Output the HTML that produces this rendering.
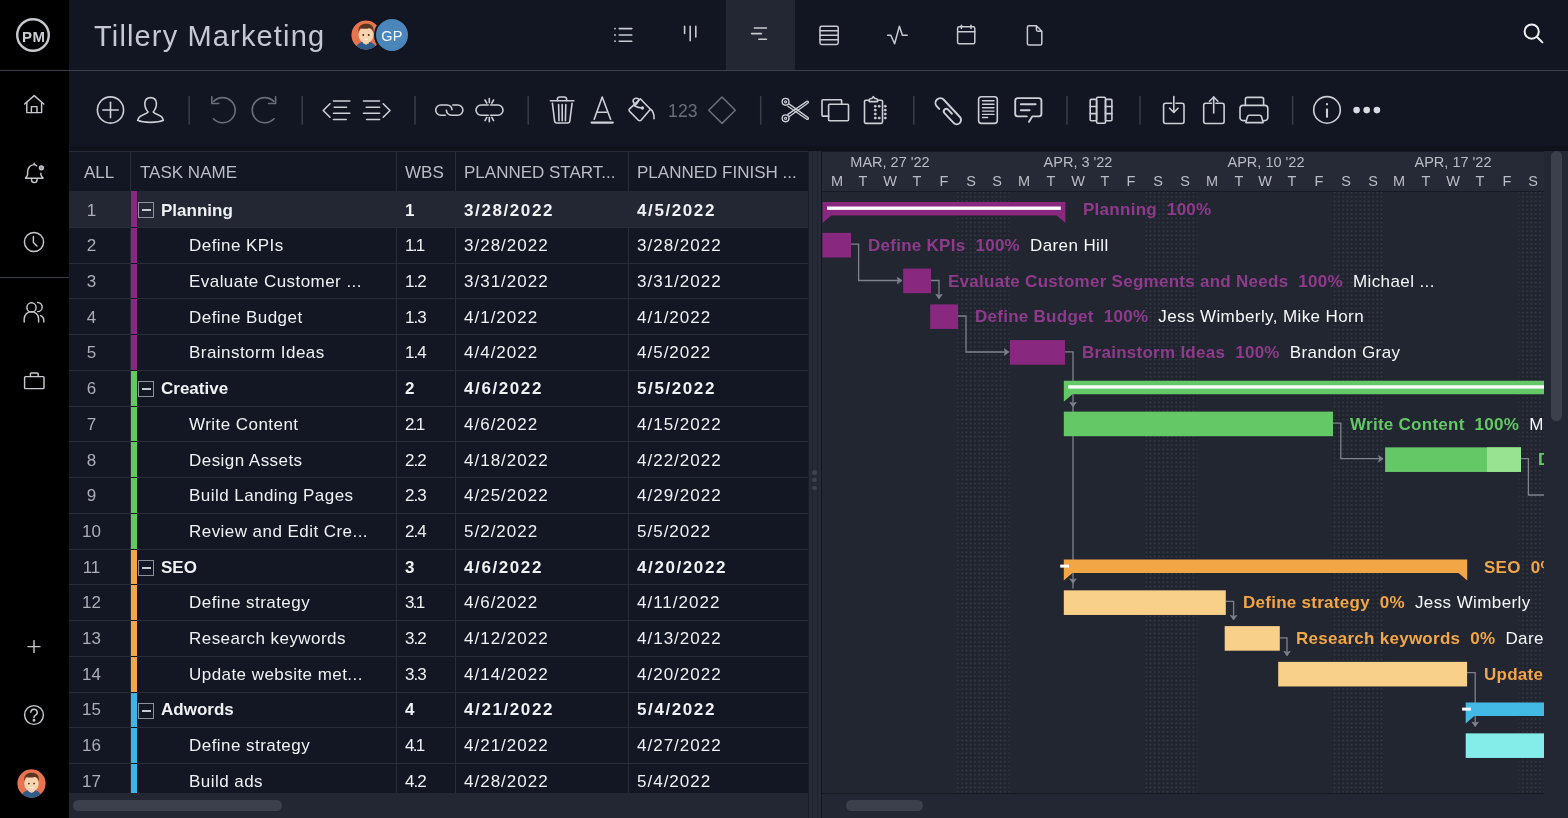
<!DOCTYPE html>
<html><head><meta charset="utf-8"><style>
*{box-sizing:border-box}
body{margin:0;width:1568px;height:818px;overflow:hidden;background:#121622;font-family:"Liberation Sans",sans-serif;position:relative}
.a{position:absolute}
.t{position:absolute;white-space:nowrap;line-height:1;will-change:transform}
svg{position:absolute;overflow:visible}
</style></head><body>

<div class="a" style="left:0;top:0;width:69px;height:818px;background:#000"></div>
<div class="a" style="left:0;top:70px;width:1568px;height:1px;background:#3b3f4b"></div>
<div class="a" style="left:0;top:277px;width:69px;height:1px;background:#3b3f4b"></div>
<div class="a" style="left:726px;top:0;width:69px;height:70px;background:#232733"></div>
<div class="t" style="left:94px;top:21.5px;font-size:29px;letter-spacing:1.15px;color:#c5c7d2">Tillery Marketing</div>
<div class="a" style="left:69px;top:146px;width:1499px;height:5px;background:#0f121b"></div>
<div class="a" style="left:69px;top:151px;width:739px;height:1px;background:#292d38"></div>
<div class="a" style="left:69px;top:152px;width:739px;height:39px;background:#131723"></div>
<div class="a" style="left:130px;top:152px;width:1px;height:39px;background:#292d38"></div>
<div class="a" style="left:396px;top:152px;width:1px;height:39px;background:#292d38"></div>
<div class="a" style="left:455px;top:152px;width:1px;height:39px;background:#292d38"></div>
<div class="a" style="left:628px;top:152px;width:1px;height:39px;background:#292d38"></div>
<div class="t" style="left:84.0px;top:164px;font-size:17px;color:#babdc6">ALL</div>
<div class="t" style="left:139.5px;top:164px;font-size:17px;color:#babdc6">TASK NAME</div>
<div class="t" style="left:405.0px;top:164px;font-size:17px;color:#babdc6">WBS</div>
<div class="t" style="left:463.5px;top:164px;font-size:17px;color:#babdc6">PLANNED START...</div>
<div class="t" style="left:636.5px;top:164px;font-size:17px;color:#babdc6">PLANNED FINISH ...</div>
<div class="a" style="left:69px;top:191px;width:739px;height:602px;overflow:hidden;background:#131723">
<div class="a" style="left:0;top:0px;width:739px;height:36px;background:#232733"></div>
<div class="a" style="left:62px;top:0px;width:6px;height:36px;background:#87297f"></div>
<div class="t" style="left:0;width:45px;text-align:center;top:10.60px;font-size:17px;color:#acaeb7">1</div>
<div class="a" style="left:69px;top:11.00px;width:16px;height:16px;border:1.5px solid #8d9099"></div>
<div class="a" style="left:72.5px;top:18.00px;width:9px;height:2px;background:#c8cad2"></div>
<div class="t" style="left:92px;top:10.60px;font-size:17px;font-weight:bold;color:#f0f1f4">Planning</div>
<div class="t" style="left:336px;top:10.60px;font-size:17px;font-weight:bold;letter-spacing:0;color:#f0f1f4">1</div>
<div class="t" style="left:394.5px;top:10.60px;font-size:17px;font-weight:bold;letter-spacing:1.6px;color:#f0f1f4">3/28/2022</div>
<div class="t" style="left:567.5px;top:10.60px;font-size:17px;font-weight:bold;letter-spacing:1.6px;color:#f0f1f4">4/5/2022</div>
<div class="a" style="left:0;top:36px;width:739px;height:36px;background:#131723"></div>
<div class="a" style="left:62px;top:37px;width:6px;height:35px;background:#87297f"></div>
<div class="t" style="left:0;width:45px;text-align:center;top:46.30px;font-size:17px;color:#acaeb7">2</div>
<div class="t" style="left:120px;top:46.30px;font-size:17px;letter-spacing:0.45px;color:#f0f1f4">Define KPIs</div>
<div class="t" style="left:336px;top:46.30px;font-size:17px;font-weight:normal;letter-spacing:-1.7px;color:#f0f1f4">1.1</div>
<div class="t" style="left:394.5px;top:46.30px;font-size:17px;font-weight:normal;letter-spacing:1px;color:#f0f1f4">3/28/2022</div>
<div class="t" style="left:567.5px;top:46.30px;font-size:17px;font-weight:normal;letter-spacing:1px;color:#f0f1f4">3/28/2022</div>
<div class="a" style="left:0;top:72px;width:739px;height:35px;background:#131723"></div>
<div class="a" style="left:62px;top:73px;width:6px;height:34px;background:#87297f"></div>
<div class="t" style="left:0;width:45px;text-align:center;top:82.00px;font-size:17px;color:#acaeb7">3</div>
<div class="t" style="left:120px;top:82.00px;font-size:17px;letter-spacing:0.45px;color:#f0f1f4">Evaluate Customer ...</div>
<div class="t" style="left:336px;top:82.00px;font-size:17px;font-weight:normal;letter-spacing:-1px;color:#f0f1f4">1.2</div>
<div class="t" style="left:394.5px;top:82.00px;font-size:17px;font-weight:normal;letter-spacing:1px;color:#f0f1f4">3/31/2022</div>
<div class="t" style="left:567.5px;top:82.00px;font-size:17px;font-weight:normal;letter-spacing:1px;color:#f0f1f4">3/31/2022</div>
<div class="a" style="left:0;top:107px;width:739px;height:36px;background:#131723"></div>
<div class="a" style="left:62px;top:108px;width:6px;height:35px;background:#87297f"></div>
<div class="t" style="left:0;width:45px;text-align:center;top:117.70px;font-size:17px;color:#acaeb7">4</div>
<div class="t" style="left:120px;top:117.70px;font-size:17px;letter-spacing:0.45px;color:#f0f1f4">Define Budget</div>
<div class="t" style="left:336px;top:117.70px;font-size:17px;font-weight:normal;letter-spacing:-1px;color:#f0f1f4">1.3</div>
<div class="t" style="left:394.5px;top:117.70px;font-size:17px;font-weight:normal;letter-spacing:1px;color:#f0f1f4">4/1/2022</div>
<div class="t" style="left:567.5px;top:117.70px;font-size:17px;font-weight:normal;letter-spacing:1px;color:#f0f1f4">4/1/2022</div>
<div class="a" style="left:0;top:143px;width:739px;height:36px;background:#131723"></div>
<div class="a" style="left:62px;top:144px;width:6px;height:35px;background:#87297f"></div>
<div class="t" style="left:0;width:45px;text-align:center;top:153.40px;font-size:17px;color:#acaeb7">5</div>
<div class="t" style="left:120px;top:153.40px;font-size:17px;letter-spacing:0.45px;color:#f0f1f4">Brainstorm Ideas</div>
<div class="t" style="left:336px;top:153.40px;font-size:17px;font-weight:normal;letter-spacing:-1px;color:#f0f1f4">1.4</div>
<div class="t" style="left:394.5px;top:153.40px;font-size:17px;font-weight:normal;letter-spacing:1px;color:#f0f1f4">4/4/2022</div>
<div class="t" style="left:567.5px;top:153.40px;font-size:17px;font-weight:normal;letter-spacing:1px;color:#f0f1f4">4/5/2022</div>
<div class="a" style="left:0;top:179px;width:739px;height:36px;background:#131723"></div>
<div class="a" style="left:62px;top:180px;width:6px;height:35px;background:#62c862"></div>
<div class="t" style="left:0;width:45px;text-align:center;top:189.10px;font-size:17px;color:#acaeb7">6</div>
<div class="a" style="left:69px;top:189.75px;width:16px;height:16px;border:1.5px solid #8d9099"></div>
<div class="a" style="left:72.5px;top:196.75px;width:9px;height:2px;background:#c8cad2"></div>
<div class="t" style="left:92px;top:189.10px;font-size:17px;font-weight:bold;color:#f0f1f4">Creative</div>
<div class="t" style="left:336px;top:189.10px;font-size:17px;font-weight:bold;letter-spacing:0;color:#f0f1f4">2</div>
<div class="t" style="left:394.5px;top:189.10px;font-size:17px;font-weight:bold;letter-spacing:1.6px;color:#f0f1f4">4/6/2022</div>
<div class="t" style="left:567.5px;top:189.10px;font-size:17px;font-weight:bold;letter-spacing:1.6px;color:#f0f1f4">5/5/2022</div>
<div class="a" style="left:0;top:215px;width:739px;height:35px;background:#131723"></div>
<div class="a" style="left:62px;top:216px;width:6px;height:34px;background:#62c862"></div>
<div class="t" style="left:0;width:45px;text-align:center;top:224.80px;font-size:17px;color:#acaeb7">7</div>
<div class="t" style="left:120px;top:224.80px;font-size:17px;letter-spacing:0.45px;color:#f0f1f4">Write Content</div>
<div class="t" style="left:336px;top:224.80px;font-size:17px;font-weight:normal;letter-spacing:-1.7px;color:#f0f1f4">2.1</div>
<div class="t" style="left:394.5px;top:224.80px;font-size:17px;font-weight:normal;letter-spacing:1px;color:#f0f1f4">4/6/2022</div>
<div class="t" style="left:567.5px;top:224.80px;font-size:17px;font-weight:normal;letter-spacing:1px;color:#f0f1f4">4/15/2022</div>
<div class="a" style="left:0;top:250px;width:739px;height:36px;background:#131723"></div>
<div class="a" style="left:62px;top:251px;width:6px;height:35px;background:#62c862"></div>
<div class="t" style="left:0;width:45px;text-align:center;top:260.50px;font-size:17px;color:#acaeb7">8</div>
<div class="t" style="left:120px;top:260.50px;font-size:17px;letter-spacing:0.45px;color:#f0f1f4">Design Assets</div>
<div class="t" style="left:336px;top:260.50px;font-size:17px;font-weight:normal;letter-spacing:-1px;color:#f0f1f4">2.2</div>
<div class="t" style="left:394.5px;top:260.50px;font-size:17px;font-weight:normal;letter-spacing:1px;color:#f0f1f4">4/18/2022</div>
<div class="t" style="left:567.5px;top:260.50px;font-size:17px;font-weight:normal;letter-spacing:1px;color:#f0f1f4">4/22/2022</div>
<div class="a" style="left:0;top:286px;width:739px;height:36px;background:#131723"></div>
<div class="a" style="left:62px;top:287px;width:6px;height:35px;background:#62c862"></div>
<div class="t" style="left:0;width:45px;text-align:center;top:296.20px;font-size:17px;color:#acaeb7">9</div>
<div class="t" style="left:120px;top:296.20px;font-size:17px;letter-spacing:0.45px;color:#f0f1f4">Build Landing Pages</div>
<div class="t" style="left:336px;top:296.20px;font-size:17px;font-weight:normal;letter-spacing:-1px;color:#f0f1f4">2.3</div>
<div class="t" style="left:394.5px;top:296.20px;font-size:17px;font-weight:normal;letter-spacing:1px;color:#f0f1f4">4/25/2022</div>
<div class="t" style="left:567.5px;top:296.20px;font-size:17px;font-weight:normal;letter-spacing:1px;color:#f0f1f4">4/29/2022</div>
<div class="a" style="left:0;top:322px;width:739px;height:36px;background:#131723"></div>
<div class="a" style="left:62px;top:323px;width:6px;height:35px;background:#62c862"></div>
<div class="t" style="left:0;width:45px;text-align:center;top:331.90px;font-size:17px;color:#acaeb7">10</div>
<div class="t" style="left:120px;top:331.90px;font-size:17px;letter-spacing:0.45px;color:#f0f1f4">Review and Edit Cre...</div>
<div class="t" style="left:336px;top:331.90px;font-size:17px;font-weight:normal;letter-spacing:-1px;color:#f0f1f4">2.4</div>
<div class="t" style="left:394.5px;top:331.90px;font-size:17px;font-weight:normal;letter-spacing:1px;color:#f0f1f4">5/2/2022</div>
<div class="t" style="left:567.5px;top:331.90px;font-size:17px;font-weight:normal;letter-spacing:1px;color:#f0f1f4">5/5/2022</div>
<div class="a" style="left:0;top:358px;width:739px;height:35px;background:#131723"></div>
<div class="a" style="left:62px;top:359px;width:6px;height:34px;background:#f2a649"></div>
<div class="t" style="left:0;width:45px;text-align:center;top:367.60px;font-size:17px;color:#acaeb7">11</div>
<div class="a" style="left:69px;top:368.50px;width:16px;height:16px;border:1.5px solid #8d9099"></div>
<div class="a" style="left:72.5px;top:375.50px;width:9px;height:2px;background:#c8cad2"></div>
<div class="t" style="left:92px;top:367.60px;font-size:17px;font-weight:bold;color:#f0f1f4">SEO</div>
<div class="t" style="left:336px;top:367.60px;font-size:17px;font-weight:bold;letter-spacing:0;color:#f0f1f4">3</div>
<div class="t" style="left:394.5px;top:367.60px;font-size:17px;font-weight:bold;letter-spacing:1.6px;color:#f0f1f4">4/6/2022</div>
<div class="t" style="left:567.5px;top:367.60px;font-size:17px;font-weight:bold;letter-spacing:1.6px;color:#f0f1f4">4/20/2022</div>
<div class="a" style="left:0;top:393px;width:739px;height:36px;background:#131723"></div>
<div class="a" style="left:62px;top:394px;width:6px;height:35px;background:#f2a649"></div>
<div class="t" style="left:0;width:45px;text-align:center;top:403.30px;font-size:17px;color:#acaeb7">12</div>
<div class="t" style="left:120px;top:403.30px;font-size:17px;letter-spacing:0.45px;color:#f0f1f4">Define strategy</div>
<div class="t" style="left:336px;top:403.30px;font-size:17px;font-weight:normal;letter-spacing:-1.7px;color:#f0f1f4">3.1</div>
<div class="t" style="left:394.5px;top:403.30px;font-size:17px;font-weight:normal;letter-spacing:1px;color:#f0f1f4">4/6/2022</div>
<div class="t" style="left:567.5px;top:403.30px;font-size:17px;font-weight:normal;letter-spacing:1px;color:#f0f1f4">4/11/2022</div>
<div class="a" style="left:0;top:429px;width:739px;height:36px;background:#131723"></div>
<div class="a" style="left:62px;top:430px;width:6px;height:35px;background:#f2a649"></div>
<div class="t" style="left:0;width:45px;text-align:center;top:439.00px;font-size:17px;color:#acaeb7">13</div>
<div class="t" style="left:120px;top:439.00px;font-size:17px;letter-spacing:0.45px;color:#f0f1f4">Research keywords</div>
<div class="t" style="left:336px;top:439.00px;font-size:17px;font-weight:normal;letter-spacing:-1px;color:#f0f1f4">3.2</div>
<div class="t" style="left:394.5px;top:439.00px;font-size:17px;font-weight:normal;letter-spacing:1px;color:#f0f1f4">4/12/2022</div>
<div class="t" style="left:567.5px;top:439.00px;font-size:17px;font-weight:normal;letter-spacing:1px;color:#f0f1f4">4/13/2022</div>
<div class="a" style="left:0;top:465px;width:739px;height:36px;background:#131723"></div>
<div class="a" style="left:62px;top:466px;width:6px;height:35px;background:#f2a649"></div>
<div class="t" style="left:0;width:45px;text-align:center;top:474.70px;font-size:17px;color:#acaeb7">14</div>
<div class="t" style="left:120px;top:474.70px;font-size:17px;letter-spacing:0.45px;color:#f0f1f4">Update website met...</div>
<div class="t" style="left:336px;top:474.70px;font-size:17px;font-weight:normal;letter-spacing:-1px;color:#f0f1f4">3.3</div>
<div class="t" style="left:394.5px;top:474.70px;font-size:17px;font-weight:normal;letter-spacing:1px;color:#f0f1f4">4/14/2022</div>
<div class="t" style="left:567.5px;top:474.70px;font-size:17px;font-weight:normal;letter-spacing:1px;color:#f0f1f4">4/20/2022</div>
<div class="a" style="left:0;top:501px;width:739px;height:35px;background:#131723"></div>
<div class="a" style="left:62px;top:502px;width:6px;height:34px;background:#3db5e6"></div>
<div class="t" style="left:0;width:45px;text-align:center;top:510.40px;font-size:17px;color:#acaeb7">15</div>
<div class="a" style="left:69px;top:511.50px;width:16px;height:16px;border:1.5px solid #8d9099"></div>
<div class="a" style="left:72.5px;top:518.50px;width:9px;height:2px;background:#c8cad2"></div>
<div class="t" style="left:92px;top:510.40px;font-size:17px;font-weight:bold;color:#f0f1f4">Adwords</div>
<div class="t" style="left:336px;top:510.40px;font-size:17px;font-weight:bold;letter-spacing:0;color:#f0f1f4">4</div>
<div class="t" style="left:394.5px;top:510.40px;font-size:17px;font-weight:bold;letter-spacing:1.6px;color:#f0f1f4">4/21/2022</div>
<div class="t" style="left:567.5px;top:510.40px;font-size:17px;font-weight:bold;letter-spacing:1.6px;color:#f0f1f4">5/4/2022</div>
<div class="a" style="left:0;top:536px;width:739px;height:36px;background:#131723"></div>
<div class="a" style="left:62px;top:537px;width:6px;height:35px;background:#3db5e6"></div>
<div class="t" style="left:0;width:45px;text-align:center;top:546.10px;font-size:17px;color:#acaeb7">16</div>
<div class="t" style="left:120px;top:546.10px;font-size:17px;letter-spacing:0.45px;color:#f0f1f4">Define strategy</div>
<div class="t" style="left:336px;top:546.10px;font-size:17px;font-weight:normal;letter-spacing:-1.7px;color:#f0f1f4">4.1</div>
<div class="t" style="left:394.5px;top:546.10px;font-size:17px;font-weight:normal;letter-spacing:1px;color:#f0f1f4">4/21/2022</div>
<div class="t" style="left:567.5px;top:546.10px;font-size:17px;font-weight:normal;letter-spacing:1px;color:#f0f1f4">4/27/2022</div>
<div class="a" style="left:0;top:572px;width:739px;height:36px;background:#131723"></div>
<div class="a" style="left:62px;top:573px;width:6px;height:35px;background:#3db5e6"></div>
<div class="t" style="left:0;width:45px;text-align:center;top:581.80px;font-size:17px;color:#acaeb7">17</div>
<div class="t" style="left:120px;top:581.80px;font-size:17px;letter-spacing:0.45px;color:#f0f1f4">Build ads</div>
<div class="t" style="left:336px;top:581.80px;font-size:17px;font-weight:normal;letter-spacing:-1px;color:#f0f1f4">4.2</div>
<div class="t" style="left:394.5px;top:581.80px;font-size:17px;font-weight:normal;letter-spacing:1px;color:#f0f1f4">4/28/2022</div>
<div class="t" style="left:567.5px;top:581.80px;font-size:17px;font-weight:normal;letter-spacing:1px;color:#f0f1f4">5/4/2022</div>
<div class="a" style="left:0;top:36px;width:739px;height:1px;background:#292d38"></div>
<div class="a" style="left:62px;top:36px;width:6px;height:1px;background:#10131b"></div>
<div class="a" style="left:0;top:72px;width:739px;height:1px;background:#292d38"></div>
<div class="a" style="left:62px;top:72px;width:6px;height:1px;background:#10131b"></div>
<div class="a" style="left:0;top:107px;width:739px;height:1px;background:#292d38"></div>
<div class="a" style="left:62px;top:107px;width:6px;height:1px;background:#10131b"></div>
<div class="a" style="left:0;top:143px;width:739px;height:1px;background:#292d38"></div>
<div class="a" style="left:62px;top:143px;width:6px;height:1px;background:#10131b"></div>
<div class="a" style="left:0;top:179px;width:739px;height:1px;background:#292d38"></div>
<div class="a" style="left:62px;top:179px;width:6px;height:1px;background:#10131b"></div>
<div class="a" style="left:0;top:215px;width:739px;height:1px;background:#292d38"></div>
<div class="a" style="left:62px;top:215px;width:6px;height:1px;background:#10131b"></div>
<div class="a" style="left:0;top:250px;width:739px;height:1px;background:#292d38"></div>
<div class="a" style="left:62px;top:250px;width:6px;height:1px;background:#10131b"></div>
<div class="a" style="left:0;top:286px;width:739px;height:1px;background:#292d38"></div>
<div class="a" style="left:62px;top:286px;width:6px;height:1px;background:#10131b"></div>
<div class="a" style="left:0;top:322px;width:739px;height:1px;background:#292d38"></div>
<div class="a" style="left:62px;top:322px;width:6px;height:1px;background:#10131b"></div>
<div class="a" style="left:0;top:358px;width:739px;height:1px;background:#292d38"></div>
<div class="a" style="left:62px;top:358px;width:6px;height:1px;background:#10131b"></div>
<div class="a" style="left:0;top:393px;width:739px;height:1px;background:#292d38"></div>
<div class="a" style="left:62px;top:393px;width:6px;height:1px;background:#10131b"></div>
<div class="a" style="left:0;top:429px;width:739px;height:1px;background:#292d38"></div>
<div class="a" style="left:62px;top:429px;width:6px;height:1px;background:#10131b"></div>
<div class="a" style="left:0;top:465px;width:739px;height:1px;background:#292d38"></div>
<div class="a" style="left:62px;top:465px;width:6px;height:1px;background:#10131b"></div>
<div class="a" style="left:0;top:501px;width:739px;height:1px;background:#292d38"></div>
<div class="a" style="left:62px;top:501px;width:6px;height:1px;background:#10131b"></div>
<div class="a" style="left:0;top:536px;width:739px;height:1px;background:#292d38"></div>
<div class="a" style="left:62px;top:536px;width:6px;height:1px;background:#10131b"></div>
<div class="a" style="left:0;top:572px;width:739px;height:1px;background:#292d38"></div>
<div class="a" style="left:62px;top:572px;width:6px;height:1px;background:#10131b"></div>
<div class="a" style="left:0;top:608px;width:739px;height:1px;background:#292d38"></div>
<div class="a" style="left:62px;top:608px;width:6px;height:1px;background:#10131b"></div>
<div class="a" style="left:61px;top:35.75px;width:1px;height:570px;background:#292d38"></div>
<div class="a" style="left:327px;top:35.75px;width:1px;height:570px;background:#292d38"></div>
<div class="a" style="left:386px;top:35.75px;width:1px;height:570px;background:#292d38"></div>
<div class="a" style="left:559px;top:35.75px;width:1px;height:570px;background:#292d38"></div>
</div>
<div class="a" style="left:69px;top:793px;width:739px;height:25px;background:#232733"></div>
<div class="a" style="left:73px;top:800px;width:209px;height:11px;border-radius:6px;background:#3c404d"></div>
<div class="a" style="left:808px;top:151px;width:14px;height:667px;background:#262a36;border-left:1px solid #1a1e29;border-right:1.5px solid #14171f"></div>
<div class="a" style="left:812px;top:151px;width:1px;height:667px;background:#20242f"></div>
<div class="a" style="left:817px;top:151px;width:1px;height:667px;background:#20242f"></div>
<div class="a" style="left:812.2px;top:470.4px;width:4.6px;height:4.6px;border-radius:50%;background:#3e424e"></div>
<div class="a" style="left:812.2px;top:477.8px;width:4.6px;height:4.6px;border-radius:50%;background:#3e424e"></div>
<div class="a" style="left:812.2px;top:485.5px;width:4.6px;height:4.6px;border-radius:50%;background:#3e424e"></div>
<div class="a" style="left:822px;top:151px;width:722px;height:41px;background:#262a36;border-top:1px solid #161a25;border-bottom:1px solid #161a25"></div>
<div class="a" style="left:822px;top:192px;width:722px;height:601px;background:#222631;overflow:hidden" id="gb">
</div>
<div class="a" style="left:822px;top:793px;width:722px;height:25px;background:#232733;border-top:1px solid #171a24"></div>
<div class="a" style="left:846px;top:800px;width:77px;height:11px;border-radius:6px;background:#3c404d"></div>
<div class="a" style="left:1544px;top:151px;width:24px;height:667px;background:#232733"></div>
<div class="a" style="left:1551px;top:151px;width:11px;height:270px;border-radius:6px;background:#3c404d"></div>
<div class="t" style="left:790.30px;width:200px;text-align:center;top:155px;font-size:14.5px;color:#babdc6">MAR, 27 '22</div>
<div class="t" style="left:977.90px;width:200px;text-align:center;top:155px;font-size:14.5px;color:#babdc6">APR, 3 '22</div>
<div class="t" style="left:1165.50px;width:200px;text-align:center;top:155px;font-size:14.5px;color:#babdc6">APR, 10 '22</div>
<div class="t" style="left:1353.10px;width:200px;text-align:center;top:155px;font-size:14.5px;color:#babdc6">APR, 17 '22</div>
<div class="t" style="left:821.60px;width:30px;text-align:center;top:174.1px;font-size:14.5px;color:#babdc6">M</div>
<div class="t" style="left:848.40px;width:30px;text-align:center;top:174.1px;font-size:14.5px;color:#babdc6">T</div>
<div class="t" style="left:875.20px;width:30px;text-align:center;top:174.1px;font-size:14.5px;color:#babdc6">W</div>
<div class="t" style="left:902.00px;width:30px;text-align:center;top:174.1px;font-size:14.5px;color:#babdc6">T</div>
<div class="t" style="left:928.80px;width:30px;text-align:center;top:174.1px;font-size:14.5px;color:#babdc6">F</div>
<div class="t" style="left:955.60px;width:30px;text-align:center;top:174.1px;font-size:14.5px;color:#babdc6">S</div>
<div class="t" style="left:982.40px;width:30px;text-align:center;top:174.1px;font-size:14.5px;color:#babdc6">S</div>
<div class="t" style="left:1009.20px;width:30px;text-align:center;top:174.1px;font-size:14.5px;color:#babdc6">M</div>
<div class="t" style="left:1036.00px;width:30px;text-align:center;top:174.1px;font-size:14.5px;color:#babdc6">T</div>
<div class="t" style="left:1062.80px;width:30px;text-align:center;top:174.1px;font-size:14.5px;color:#babdc6">W</div>
<div class="t" style="left:1089.60px;width:30px;text-align:center;top:174.1px;font-size:14.5px;color:#babdc6">T</div>
<div class="t" style="left:1116.40px;width:30px;text-align:center;top:174.1px;font-size:14.5px;color:#babdc6">F</div>
<div class="t" style="left:1143.20px;width:30px;text-align:center;top:174.1px;font-size:14.5px;color:#babdc6">S</div>
<div class="t" style="left:1170.00px;width:30px;text-align:center;top:174.1px;font-size:14.5px;color:#babdc6">S</div>
<div class="t" style="left:1196.80px;width:30px;text-align:center;top:174.1px;font-size:14.5px;color:#babdc6">M</div>
<div class="t" style="left:1223.60px;width:30px;text-align:center;top:174.1px;font-size:14.5px;color:#babdc6">T</div>
<div class="t" style="left:1250.40px;width:30px;text-align:center;top:174.1px;font-size:14.5px;color:#babdc6">W</div>
<div class="t" style="left:1277.20px;width:30px;text-align:center;top:174.1px;font-size:14.5px;color:#babdc6">T</div>
<div class="t" style="left:1304.00px;width:30px;text-align:center;top:174.1px;font-size:14.5px;color:#babdc6">F</div>
<div class="t" style="left:1330.80px;width:30px;text-align:center;top:174.1px;font-size:14.5px;color:#babdc6">S</div>
<div class="t" style="left:1357.60px;width:30px;text-align:center;top:174.1px;font-size:14.5px;color:#babdc6">S</div>
<div class="t" style="left:1384.40px;width:30px;text-align:center;top:174.1px;font-size:14.5px;color:#babdc6">M</div>
<div class="t" style="left:1411.20px;width:30px;text-align:center;top:174.1px;font-size:14.5px;color:#babdc6">T</div>
<div class="t" style="left:1438.00px;width:30px;text-align:center;top:174.1px;font-size:14.5px;color:#babdc6">W</div>
<div class="t" style="left:1464.80px;width:30px;text-align:center;top:174.1px;font-size:14.5px;color:#babdc6">T</div>
<div class="t" style="left:1491.60px;width:30px;text-align:center;top:174.1px;font-size:14.5px;color:#babdc6">F</div>
<div class="t" style="left:1518.40px;width:30px;text-align:center;top:174.1px;font-size:14.5px;color:#babdc6">S</div>
<svg width="722" height="601" viewBox="822 192 722 601" style="left:822px;top:192px;overflow:hidden">
<defs><pattern id="dots" x="955.76" y="190.5" width="4.28" height="4.28" patternUnits="userSpaceOnUse"><rect width="4.28" height="4.28" fill="#20242e"/><circle cx="2.14" cy="2.14" r="0.9" fill="#383c49"/></pattern></defs>
<rect x="956.00" y="192" width="53.60" height="601" fill="url(#dots)"/>
<rect x="1143.60" y="192" width="53.60" height="601" fill="url(#dots)"/>
<rect x="1331.20" y="192" width="53.60" height="601" fill="url(#dots)"/>
<rect x="1518.80" y="192" width="53.60" height="601" fill="url(#dots)"/>
<g fill="none" stroke="#7f828b" stroke-width="1.3" stroke-linejoin="miter"><path d="M851,244.2 H858.6 V280.5 H901.5"/><path d="M897.3,277.3 L901.8,280.5 L897.3,283.7 L898.4,280.5 Z" fill="#7f828b" stroke-width="0.8"/><path d="M931,280.5 H939 V298.5"/><path d="M935.8,294.3 L939.0,298.8 L942.2,294.3 L939.0,295.4 Z" fill="#7f828b" stroke-width="0.8"/><path d="M958,316 H966 V352 H1008.5"/><path d="M1004.3,348.8 L1008.8,352.0 L1004.3,355.2 L1005.4,352.0 Z" fill="#7f828b" stroke-width="0.8"/><path d="M1065,351.8 H1073 V588.5"/><path d="M1069.8,402.3 L1073.0,406.8 L1076.2,402.3 L1073.0,403.4 Z" fill="#7f828b" stroke-width="0.8"/><path d="M1069.8,578.8 L1073.0,583.3 L1076.2,578.8 L1073.0,579.9 Z" fill="#7f828b" stroke-width="0.8"/><path d="M1333,423.2 H1340.8 V458.7 H1382.8"/><path d="M1378.6,455.5 L1383.1,458.7 L1378.6,461.9 L1379.7,458.7 Z" fill="#7f828b" stroke-width="0.8"/><path d="M1521,458.7 H1528.4 V495 H1550"/><path d="M1226,601.3 H1233.6 V619.6"/><path d="M1230.4,615.4 L1233.6,619.9 L1236.8,615.4 L1233.6,616.5 Z" fill="#7f828b" stroke-width="0.8"/><path d="M1280,637.9 H1287 V655.5"/><path d="M1283.8,651.3 L1287.0,655.8 L1290.2,651.3 L1287.0,652.4 Z" fill="#7f828b" stroke-width="0.8"/><path d="M1467,672.7 H1475.2 V726.2"/><path d="M1472.0,722.0 L1475.2,726.5 L1478.4,722.0 L1475.2,723.1 Z" fill="#7f828b" stroke-width="0.8"/></g>
<path d="M822.60,201.90 H1065.40 V223.10 L1056.80,215.50 L1056.80,215.50 H831.20 L822.60,223.10 Z" fill="#88297f"/><rect x="827.00" y="206.50" width="233.80" height="3.4" fill="#fbfbfd"/><rect x="822.40" y="232.85" width="28.60" height="24.6" fill="#88297f"/><rect x="903.20" y="268.60" width="27.80" height="24.6" fill="#88297f"/><rect x="930.20" y="304.35" width="27.80" height="24.6" fill="#88297f"/><rect x="1010.00" y="340.10" width="55.00" height="24.6" fill="#88297f"/><path d="M1063.80,380.65 H1600.00 V401.85 L1591.40,394.25 L1591.40,394.25 H1072.40 L1063.80,401.85 Z" fill="#63c865"/><rect x="1068.20" y="385.25" width="527.20" height="3.4" fill="#fbfbfd"/><rect x="1063.80" y="411.60" width="269.20" height="24.6" fill="#63c865"/><rect x="1385.10" y="447.35" width="135.90" height="24.6" fill="#63c865"/><rect x="1487.00" y="447.35" width="34.00" height="24.6" fill="#97e391"/><path d="M1063.80,559.40 H1467.20 V580.60 L1458.60,573.00 L1458.60,573.00 H1072.40 L1063.80,580.60 Z" fill="#f3a646"/><rect x="1060.20" y="564.60" width="8.8" height="3" fill="#fbfbfd"/><rect x="1063.80" y="590.35" width="162.00" height="24.6" fill="#f9d08a"/><rect x="1224.70" y="626.10" width="55.10" height="24.6" fill="#f9d08a"/><rect x="1278.20" y="661.85" width="188.90" height="24.6" fill="#f9d08a"/><path d="M1465.70,702.40 H1600.00 V723.60 L1591.40,716.00 L1591.40,716.00 H1474.30 L1465.70,723.60 Z" fill="#43bae6"/><rect x="1462.10" y="707.60" width="8.8" height="3" fill="#fbfbfd"/><rect x="1465.70" y="733.35" width="134.30" height="24.6" fill="#84ece9"/>
</svg>
<div class="a" style="left:822px;top:192px;width:722px;height:601px;overflow:hidden">
<div class="t" style="left:260.60px;top:9.20px;font-size:17px;letter-spacing:0.27px"><b style="color:#8f3a8c">Planning&nbsp; 100%</b></div><div class="t" style="left:46.00px;top:44.95px;font-size:17px;letter-spacing:0.27px"><b style="color:#8f3a8c">Define KPIs&nbsp; 100%</b><span style="color:#f6f7f9;margin-left:10px;letter-spacing:0.4px">Daren Hill</span></div><div class="t" style="left:126.00px;top:80.70px;font-size:17px;letter-spacing:0.27px"><b style="color:#8f3a8c">Evaluate Customer Segments and Needs&nbsp; 100%</b><span style="color:#f6f7f9;margin-left:10px;letter-spacing:0.4px">Michael ...</span></div><div class="t" style="left:153.00px;top:116.45px;font-size:17px;letter-spacing:0.27px"><b style="color:#8f3a8c">Define Budget&nbsp; 100%</b><span style="color:#f6f7f9;margin-left:10px;letter-spacing:0.4px">Jess Wimberly, Mike Horn</span></div><div class="t" style="left:260.00px;top:152.20px;font-size:17px;letter-spacing:0.27px"><b style="color:#8f3a8c">Brainstorm Ideas&nbsp; 100%</b><span style="color:#f6f7f9;margin-left:10px;letter-spacing:0.4px">Brandon Gray</span></div><div class="t" style="left:528.00px;top:223.70px;font-size:17px;letter-spacing:0.27px"><b style="color:#63c865">Write Content&nbsp; 100%</b><span style="color:#f6f7f9;margin-left:10px;letter-spacing:0.4px">Michael Gray</span></div><div class="t" style="left:716.00px;top:259.45px;font-size:17px;letter-spacing:0.27px"><b style="color:#63c865">Design Assets&nbsp; 50%</b><span style="color:#f6f7f9;margin-left:10px;letter-spacing:0.4px">Someone</span></div><div class="t" style="left:662.00px;top:366.70px;font-size:17px;letter-spacing:0.27px"><b style="color:#f3a646">SEO&nbsp; 0%</b></div><div class="t" style="left:421.00px;top:402.45px;font-size:17px;letter-spacing:0.27px"><b style="color:#f3a646">Define strategy&nbsp; 0%</b><span style="color:#f6f7f9;margin-left:10px;letter-spacing:0.4px">Jess Wimberly</span></div><div class="t" style="left:474.00px;top:438.20px;font-size:17px;letter-spacing:0.27px"><b style="color:#f3a646">Research keywords&nbsp; 0%</b><span style="color:#f6f7f9;margin-left:10px;letter-spacing:0.4px">Daren Hill</span></div><div class="t" style="left:662.00px;top:473.95px;font-size:17px;letter-spacing:0.27px"><b style="color:#f3a646">Update website meta&nbsp; 0%</b></div>
</div>
<svg width="1568" height="818" style="left:0;top:0" fill="none" stroke="#3a3e4a" stroke-width="1.5" stroke-linecap="round" stroke-linejoin="round"><line x1="189.2" y1="96.5" x2="189.2" y2="124" /><line x1="302.2" y1="96.5" x2="302.2" y2="124" /><line x1="415.0" y1="96.5" x2="415.0" y2="124" /><line x1="528.2" y1="96.5" x2="528.2" y2="124" /><line x1="760.7" y1="96.5" x2="760.7" y2="124" /><line x1="913.8" y1="96.5" x2="913.8" y2="124" /><line x1="1067.0" y1="96.5" x2="1067.0" y2="124" /><line x1="1140.0" y1="96.5" x2="1140.0" y2="124" /><line x1="1292.6" y1="96.5" x2="1292.6" y2="124" /></svg>
<svg width="1568" height="818" style="left:0;top:0" fill="none" stroke="#cdcfd6" stroke-width="1.6" stroke-linecap="round" stroke-linejoin="round"><circle cx="110.5" cy="110" r="13.1"/><line x1="102.8" y1="110" x2="118.2" y2="110"/><line x1="110.5" y1="102.3" x2="110.5" y2="117.7"/><path d="M148.1,112 C143.5,107 143.2,97.6 150.6,97.6 C158,97.6 157.7,107 153.2,112 C155.5,114.6 160.5,115 162,117.2 L163.4,120.3 C158,123 143,123 137.6,120.3 L139.2,117.2 C140.7,115 145.7,114.6 148.1,112 Z"/><path d="M330,103.8 L323.2,110.5 L330,117.2"/><line x1="333.5" y1="101" x2="349.8" y2="101"/><line x1="334.2" y1="107.2" x2="346.6" y2="107.2"/><line x1="333.5" y1="113.3" x2="349.8" y2="113.3"/><line x1="333.5" y1="119.5" x2="346.2" y2="119.5"/><path d="M383.2,103.8 L390,110.5 L383.2,117.2"/><line x1="363.5" y1="101" x2="379.6" y2="101"/><line x1="366.2" y1="107.2" x2="379.6" y2="107.2"/><line x1="363.5" y1="113.3" x2="379.6" y2="113.3"/><line x1="366.6" y1="119.5" x2="379.6" y2="119.5"/><path d="M445.3,115.2 H440.8 A5.1,5.1 0 0 1 440.8,105 H447 A5.2,5.2 0 0 1 452,109.6"/><path d="M452.8,105 H457.8 A5.1,5.1 0 0 1 457.8,115.2 H451.4 A5.1,5.1 0 0 1 446.4,110.4"/><path d="M488.2,115.2 H481.1 A5.1,5.1 0 0 1 481.1,105 H488.2"/><path d="M490.5,105 H497.9 A5.1,5.1 0 0 1 497.9,115.2 H490.5"/><line x1="489.3" y1="98.6" x2="489.3" y2="102.6"/><line x1="485" y1="100" x2="486.8" y2="103.2"/><line x1="493.6" y1="100" x2="491.8" y2="103.2"/><line x1="489.3" y1="117.6" x2="489.3" y2="121.8"/><line x1="485" y1="120.6" x2="486.8" y2="117.4"/><line x1="493.6" y1="120.6" x2="491.8" y2="117.4"/><line x1="550.3" y1="100.8" x2="573.9" y2="100.8"/><path d="M557.4,100.6 V99.2 A2.2,2.2 0 0 1 559.6,97 H564.4 A2.2,2.2 0 0 1 566.6,99.2 V100.6"/><path d="M552.4,103.2 L554.6,121 A2.2,2.2 0 0 0 556.8,123 H567.6 A2.2,2.2 0 0 0 569.8,121 L572.1,103.2"/><line x1="558.6" y1="104.5" x2="559" y2="120.8"/><line x1="562.2" y1="104.5" x2="562.2" y2="120.8"/><line x1="565.8" y1="104.5" x2="565.4" y2="120.8"/><path d="M594.2,119.2 L602.2,97 L610.6,119.2"/><line x1="597.6" y1="112.3" x2="606.8" y2="112.3"/><line x1="591.6" y1="122.6" x2="612.8" y2="122.6" stroke-width="2.2"/><path d="M640.3,98.8 L650.4,109.2 L641,120.2 A1.8,1.8 0 0 1 638.4,120.2 L629.6,111.4 A1.8,1.8 0 0 1 629.6,108.8 Z"/><path d="M634.8,103.8 C631.5,100.8 633.5,98 637,98.3 C640.5,98.6 638,103.5 634.4,105.8 C637.4,107.6 640.4,108 642.2,108"/><circle cx="642.4" cy="108" r="0.9" fill="#cdcfd6"/><path d="M650.4,109.2 C653.5,111 654.2,114 654,118.8"/><circle cx="785.6" cy="101.8" r="3.4" stroke-width="1.4"/><circle cx="785.6" cy="101.8" r="1.1" stroke-width="1.1"/><circle cx="785.6" cy="118.3" r="3.4" stroke-width="1.4"/><circle cx="785.6" cy="118.3" r="1.1" stroke-width="1.1"/><path d="M789.35,104.14 L808,117.6 A1,1 0 0 1 806.8,119.2 L787.85,106.26" stroke-width="1.3"/><path d="M787.85,114.34 L806.83,101.38 A1,1 0 0 1 807.98,103.02 L789.35,116.46" stroke-width="1.3"/><path d="M828.6,116.1 H822.8 A0.8,0.8 0 0 1 822,115.3 V100.5 A0.8,0.8 0 0 1 822.8,99.7 H840.8 A0.8,0.8 0 0 1 841.6,100.5 V104.2"/><rect x="828.6" y="104.2" width="19.9" height="16.5" rx="1"/><path d="M869.2,100.2 H865.8 A1.3,1.3 0 0 0 864.5,101.5 V122.1 A1.3,1.3 0 0 0 865.8,123.4 H881.2 A1.3,1.3 0 0 0 882.5,122.1 V101.5 A1.3,1.3 0 0 0 881.2,100.2 H877.6"/><path d="M869.2,101.6 H877.6 V100 C877.6,98.6 875.6,98.6 874.6,98.4 L873.3,96.6 L872,98.4 C871,98.6 869.2,98.6 869.2,100 Z"/><circle cx="875.2" cy="106.2" r="1" fill="#cdcfd6" stroke-width="0.8"/><circle cx="879.1" cy="106.2" r="1" fill="#cdcfd6" stroke-width="0.8"/><circle cx="885.2" cy="106.2" r="1" fill="#cdcfd6" stroke-width="0.8"/><circle cx="875.2" cy="110.1" r="1" fill="#cdcfd6" stroke-width="0.8"/><circle cx="885.2" cy="110.1" r="1" fill="#cdcfd6" stroke-width="0.8"/><circle cx="875.2" cy="114.0" r="1" fill="#cdcfd6" stroke-width="0.8"/><circle cx="885.2" cy="114.0" r="1" fill="#cdcfd6" stroke-width="0.8"/><circle cx="875.2" cy="118.0" r="1" fill="#cdcfd6" stroke-width="0.8"/><circle cx="879.1" cy="118.0" r="1" fill="#cdcfd6" stroke-width="0.8"/><circle cx="885.2" cy="118.0" r="1" fill="#cdcfd6" stroke-width="0.8"/><rect x="978.6" y="96.8" width="18.7" height="26.6" rx="2.8"/><line x1="982.5" y1="100.8" x2="994" y2="100.8" stroke-width="1.4"/><line x1="982.5" y1="104.3" x2="994" y2="104.3" stroke-width="1.4"/><line x1="982.5" y1="107.8" x2="994" y2="107.8" stroke-width="1.4"/><line x1="982.5" y1="111.1" x2="994" y2="111.1" stroke-width="1.4"/><line x1="982.5" y1="114.4" x2="994" y2="114.4" stroke-width="1.4"/><line x1="982.5" y1="117.5" x2="987.6" y2="117.5" stroke-width="1.4"/><path d="M1026.8,116.4 H1017.8 A2.6,2.6 0 0 1 1015.2,113.8 V100.7 A2.6,2.6 0 0 1 1017.8,98.1 H1038.8 A2.6,2.6 0 0 1 1041.4,100.7 V113.8 A2.6,2.6 0 0 1 1038.8,116.4 H1032.2 L1029,121.8" stroke-width="1.9"/><line x1="1020.8" y1="104.3" x2="1035.6" y2="104.3" stroke-width="1.9"/><line x1="1020.8" y1="110.2" x2="1029.6" y2="110.2" stroke-width="1.9"/><g transform="translate(948.2 111.5) rotate(-43)"><path d="M-4.8,-8 V-11.6 A4.8,4.8 0 0 1 4.8,-11.6 V12 A4.3,4.3 0 0 1 -3.8,12 V-1.4 A2.5,2.5 0 0 1 1.2,-1.4 V4.2" stroke-width="1.9"/></g><rect x="1096.6" y="97.2" width="8.9" height="26" rx="1.2"/><rect x="1090.2" y="99.4" width="6.4" height="21.3" rx="1"/><line x1="1090.2" y1="106.5" x2="1096.6" y2="106.5"/><line x1="1090.2" y1="113.6" x2="1096.6" y2="113.6"/><rect x="1105.5" y="99.4" width="6.4" height="21.3" rx="1"/><line x1="1105.5" y1="106.5" x2="1111.9" y2="106.5"/><line x1="1105.5" y1="113.6" x2="1111.9" y2="113.6"/><path d="M1171.6,103.3 H1165.6 A2,2 0 0 0 1163.6,105.3 V121.5 A2,2 0 0 0 1165.6,123.5 H1182 A2,2 0 0 0 1184,121.5 V105.3 A2,2 0 0 0 1182,103.3 H1176"/><line x1="1173.8" y1="96.5" x2="1173.8" y2="112.2"/><path d="M1169.6,108.2 L1173.8,112.4 L1178,108.2"/><path d="M1211.5,103.3 H1205.7 A2,2 0 0 0 1203.7,105.3 V121.5 A2,2 0 0 0 1205.7,123.5 H1222.1 A2,2 0 0 0 1224.1,121.5 V105.3 A2,2 0 0 0 1222.1,103.3 H1215.9"/><line x1="1213.7" y1="97" x2="1213.7" y2="113"/><path d="M1209.5,101.2 L1213.7,97 L1217.9,101.2"/><path d="M1245.4,105.4 V99.4 A2,2 0 0 1 1247.4,97.4 H1261.6 A2,2 0 0 1 1263.6,99.4 V105.4"/><path d="M1245.2,120.6 H1243 A3,3 0 0 1 1240,117.6 V108.4 A3,3 0 0 1 1243,105.4 H1264.8 A3,3 0 0 1 1267.8,108.4 V117.6 A3,3 0 0 1 1264.8,120.6 H1263.8"/><path d="M1245.8,122.6 L1247.6,116.6 A1.6,1.6 0 0 1 1249.2,115.3 H1259.8 A1.6,1.6 0 0 1 1261.4,116.6 L1263.2,122.6 Z"/><circle cx="1327" cy="109.9" r="13.3"/><line x1="1327" y1="108.6" x2="1327" y2="117.6" stroke-width="2.1" stroke-linecap="butt"/><rect x="1326" y="103.2" width="2" height="2" fill="#cdcfd6" stroke="none"/><circle cx="1356.6" cy="110.1" r="3.3" fill="#d9dbe2" stroke="none"/><circle cx="1366.7" cy="110.1" r="3.3" fill="#d9dbe2" stroke="none"/><circle cx="1376.9" cy="110.1" r="3.3" fill="#d9dbe2" stroke="none"/></svg>
<svg width="1568" height="818" style="left:0;top:0" fill="none" stroke="#6a6e7a" stroke-width="1.6" stroke-linecap="round" stroke-linejoin="round"><path d="M213.6,101.4 A12.6,12.6 0 1 1 213.4,118.8"/><path d="M211.8,96.8 V103.5 H218.8"/><path d="M273.8,101.4 A12.6,12.6 0 1 0 274,118.8"/><path d="M275.6,96.8 V103.5 H268.6"/><path d="M722,97 L735.3,110.2 L722,123.4 L708.7,110.2 Z" stroke-width="1.5"/></svg>
<div class="t" style="left:668.2px;top:102.6px;font-size:17.6px;color:#6a6e7a;letter-spacing:0.1px">123</div>
<svg width="1568" height="818" style="left:0;top:0" fill="none" stroke="#c9cbd3" stroke-width="1.5" stroke-linecap="round" stroke-linejoin="round"><circle cx="615" cy="28.6" r="0.9" fill="#cdcfd6" stroke="none"/><line x1="619.2" y1="28.6" x2="631.8" y2="28.6" stroke-width="1.6"/><circle cx="615" cy="35.0" r="0.9" fill="#cdcfd6" stroke="none"/><line x1="619.2" y1="35.0" x2="631.8" y2="35.0" stroke-width="1.6"/><circle cx="615" cy="41.2" r="0.9" fill="#cdcfd6" stroke="none"/><line x1="619.2" y1="41.2" x2="631.8" y2="41.2" stroke-width="1.6"/><line x1="684.6" y1="26.4" x2="684.6" y2="33.4" stroke-width="1.6"/><line x1="690.2" y1="26.4" x2="690.2" y2="40.8" stroke-width="1.6"/><line x1="695.8" y1="26.4" x2="695.8" y2="37" stroke-width="1.6"/><line x1="754.4" y1="28" x2="766.4" y2="28" stroke-width="1.6"/><line x1="751.6" y1="33.6" x2="761.4" y2="33.6" stroke-width="1.6"/><line x1="758.8" y1="39.2" x2="766.4" y2="39.2" stroke-width="1.6"/><rect x="820" y="26.2" width="18.2" height="18.2" rx="1.6"/><line x1="820" y1="30.8" x2="838.2" y2="30.8"/><line x1="820" y1="35.3" x2="838.2" y2="35.3"/><line x1="820" y1="39.8" x2="838.2" y2="39.8"/><path d="M887.6,35.2 H890.8 L894.6,43.8 L899.4,26.2 L902.4,35.2 H907.2"/><rect x="957.6" y="26.8" width="17.2" height="17" rx="1.6"/><line x1="957.6" y1="31.8" x2="974.8" y2="31.8"/><line x1="961.4" y1="25.2" x2="961.4" y2="28.4"/><line x1="971" y1="25.2" x2="971" y2="28.4"/><path d="M1036.4,25.8 H1029 A1.6,1.6 0 0 0 1027.4,27.4 V43.4 A1.6,1.6 0 0 0 1029,45 H1040.2 A1.6,1.6 0 0 0 1041.8,43.4 V31.2 Z M1036.4,25.8 V29.6 A1.6,1.6 0 0 0 1038,31.2 H1041.8"/><circle cx="1531.7" cy="31.6" r="7.1" stroke="#f0f1f4" stroke-width="2"/><line x1="1537" y1="37" x2="1542.4" y2="42.4" stroke="#f0f1f4" stroke-width="2"/></svg>
<svg width="1568" height="818" style="left:0;top:0" fill="none" stroke="#c6c8ce" stroke-width="1.45" stroke-linecap="round" stroke-linejoin="round"><circle cx="33" cy="35" r="15.8" stroke-width="2.4"/><path d="M24.6,104 L34.2,95.6 L43.8,104"/><path d="M26.8,102.4 V112.6 H41.6 V102.4"/><path d="M31.4,112.6 V106.6 H37 V112.6"/><path d="M36.6,165.7 C35.9,165 35,164.6 34.2,164.6 C29.9,164.6 27.6,168.3 27.6,172.2 V174.4 C27.6,175.8 26.3,177 25.5,178.2 H43.1 C42.3,177 40.9,175.8 40.9,174.4 V173.2"/><line x1="34.2" y1="163.2" x2="34.2" y2="164.6"/><path d="M31.5,178.4 V179.8 A2.8,2.8 0 0 0 37.1,179.8 V178.4"/><circle cx="41.4" cy="167.8" r="2" fill="#9a9ca4" stroke-width="1.3"/><circle cx="34" cy="242" r="9.6"/><path d="M33.4,236.4 V242.4 L37,246"/><circle cx="31.5" cy="307.4" r="4.6"/><path d="M24.2,322 V318.8 A7.2,7.2 0 0 1 38.6,318.8 V322"/><path d="M37.6,302.4 A4.6,4.6 0 0 1 37.6,311.6"/><path d="M40.6,315.6 A5,5 0 0 1 43.8,320.2 V322"/><rect x="24.6" y="376.6" width="19.4" height="12" rx="0.8"/><path d="M30.4,376.6 V373.8 A0.8,0.8 0 0 1 31.2,373 H37.4 A0.8,0.8 0 0 1 38.2,373.8 V376.6"/><line x1="28" y1="646.6" x2="40" y2="646.6"/><line x1="34" y1="640.6" x2="34" y2="652.6"/><circle cx="34" cy="715" r="9.4"/><path d="M30.8,712.2 A3.2,3.2 0 1 1 35.2,715.4 C34.3,715.9 34,716.5 34,717.4"/><circle cx="34" cy="720.2" r="0.7" fill="#cfd1d8"/></svg><div class="t" style="left:22px;top:28.5px;font-size:15px;font-weight:bold;color:#c9cbd1;letter-spacing:0.6px">PM</div>
<svg width="30" height="30" viewBox="-20 -20 40 40" style="left:350.7px;top:20.0px"><defs><clipPath id="cp365"><circle cx="0" cy="0" r="19.5"/></clipPath></defs><g clip-path="url(#cp365)"><circle cx="0" cy="0" r="20" fill="#e8734f"/><path d="M-14,20 C-13,11 -7,9 0,9 C7,9 13,11 14,20 Z" fill="#2e5d8c"/><path d="M-4,6 H4 V11 L0,13 L-4,11 Z" fill="#f3c8a0"/><ellipse cx="0" cy="0" rx="10" ry="11" fill="#f7d3b0"/><path d="M-10,-3 C-11,-12 -6,-15 0,-15 C7,-15 11,-12 10,-3 C9,-7 7,-9 4,-9 C1,-8 -4,-8 -7,-9 C-9,-8 -9,-6 -10,-3 Z" fill="#5a3620"/><circle cx="-3.6" cy="0" r="1.2" fill="#3a2414"/><circle cx="3.6" cy="0" r="1.2" fill="#3a2414"/><path d="M-3,5 Q0,7.5 3,5 Z" fill="#fff"/></g></svg><div class="a" style="left:373.5px;top:17px;width:36px;height:36px;border-radius:50%;background:#4a86b9;border:2.5px solid #121622"></div><div class="t" style="left:373.5px;top:28.5px;width:36px;text-align:center;font-size:14.5px;color:#f4f6fa;letter-spacing:0.2px">GP</div>
<svg width="29" height="29" viewBox="-20 -20 40 40" style="left:17.0px;top:768.9px"><defs><clipPath id="cp31"><circle cx="0" cy="0" r="19.5"/></clipPath></defs><g clip-path="url(#cp31)"><circle cx="0" cy="0" r="20" fill="#e8734f"/><path d="M-14,20 C-13,11 -7,9 0,9 C7,9 13,11 14,20 Z" fill="#2e5d8c"/><path d="M-4,6 H4 V11 L0,13 L-4,11 Z" fill="#f3c8a0"/><ellipse cx="0" cy="0" rx="10" ry="11" fill="#f7d3b0"/><path d="M-10,-3 C-11,-12 -6,-15 0,-15 C7,-15 11,-12 10,-3 C9,-7 7,-9 4,-9 C1,-8 -4,-8 -7,-9 C-9,-8 -9,-6 -10,-3 Z" fill="#5a3620"/><circle cx="-3.6" cy="0" r="1.2" fill="#3a2414"/><circle cx="3.6" cy="0" r="1.2" fill="#3a2414"/><path d="M-3,5 Q0,7.5 3,5 Z" fill="#fff"/></g></svg>
</body></html>
